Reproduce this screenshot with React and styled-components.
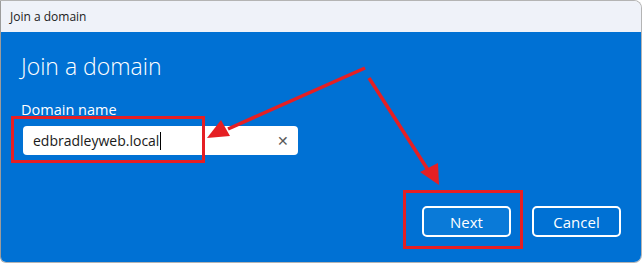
import React from 'react';
import styled, { createGlobalStyle } from 'styled-components';

const Global = createGlobalStyle`
  html, body { margin: 0; padding: 0; background: #ffffff; }
  body { font-family: "Open Sans", "Noto Sans", sans-serif; }
`;

const Page = styled.div`
  position: relative;
  width: 642px;
  height: 263px;
  overflow: hidden;
`;

const Window = styled.div`
  width: 642px;
  height: 263px;
  box-sizing: border-box;
  border: 1px solid #b4b4b4;
  border-left-color: #9c9c9c;
  border-radius: 0 8px 8px 6px;
  overflow: hidden;
  display: flex;
  flex-direction: column;
`;

const TitleBar = styled.div`
  height: 31px;
  flex: none;
  background: #eff2f9;
  display: flex;
  align-items: center;
  padding-left: 9px;
  font-size: 12px;
  color: #1b1b1b;
`;

const Body = styled.div`
  flex: 1;
  background: #0071d4;
  color: #ffffff;
  padding: 18px 20px 0 20px;
  display: flex;
  flex-direction: column;
`;

const Heading = styled.div`
  font-size: 23px;
  font-weight: 300;
  line-height: 32px;
`;

const Label = styled.div`
  margin-top: 18px;
  font-size: 14.5px;
  line-height: 19px;
`;

const Field = styled.div`
  margin-top: 7px;
  margin-left: 2px;
  width: 275px;
  height: 29px;
  background: #ffffff;
  border-radius: 4px;
  display: flex;
  align-items: center;
  padding: 0 10px;
  box-sizing: border-box;
  color: #1a1a1a;
  font-size: 14px;
`;

const Value = styled.span`
  flex: 1;
  display: flex;
  align-items: center;
`;

const Caret = styled.span`
  display: inline-block;
  width: 1px;
  height: 18px;
  background: #000000;
  margin-left: 1px;
`;

const Clear = styled.span`
  color: #5a5a5a;
  font-size: 14px;
  line-height: 1;
  margin-right: -1px;
`;

const Actions = styled.div`
  margin-top: 51px;
  display: flex;
  justify-content: flex-end;
  gap: 21px;
`;

const Button = styled.div`
  width: 89px;
  height: 31px;
  box-sizing: border-box;
  border: 2px solid #ffffff;
  border-radius: 5px;
  background: ${({ $primary }) => ($primary ? '#0a7ad8' : '#0071d4')};
  display: flex;
  align-items: center;
  justify-content: center;
  font-size: 15px;
  color: #ffffff;
`;

const Overlay = styled.svg`
  position: absolute;
  left: 0;
  top: 0;
  pointer-events: none;
`;

const RED = '#e51f23';

const Annotations = () => (
  <Overlay width="642" height="263" viewBox="0 0 642 263">
    <rect x="12.5" y="117.5" width="191" height="44" fill="none" stroke={RED} strokeWidth="3" />
    <rect x="404.5" y="191.5" width="117" height="56" fill="none" stroke={RED} strokeWidth="3" />
    <line x1="365" y1="68" x2="228" y2="129" stroke={RED} strokeWidth="3.5" />
    <polygon points="207,138 221,120 230,136" fill={RED} />
    <line x1="369" y1="78" x2="428" y2="170" stroke={RED} strokeWidth="3.5" />
    <polygon points="439,185 420,172 438,163" fill={RED} />
  </Overlay>
);

export default function App() {
  return (
    <Page>
      <Global />
      <Window>
        <TitleBar>Join a domain</TitleBar>
        <Body>
          <Heading>Join a domain</Heading>
          <Label>Domain name</Label>
          <Field>
            <Value>
              edbradleyweb.local
              <Caret />
            </Value>
            <Clear>✕</Clear>
          </Field>
          <Actions>
            <Button $primary>Next</Button>
            <Button>Cancel</Button>
          </Actions>
        </Body>
      </Window>
      <Annotations />
    </Page>
  );
}
